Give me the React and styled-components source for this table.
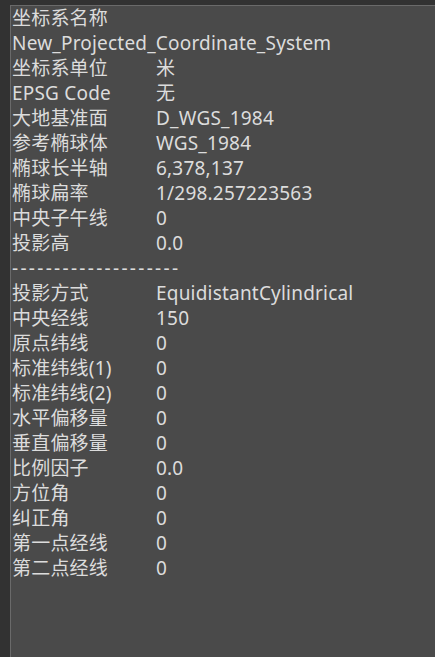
import React from 'react';
import styled, { createGlobalStyle } from 'styled-components';

const GlobalStyle = createGlobalStyle`
    html, body {
        margin: 0;
        padding: 0;
        background: #323232;
    }
`;

const rows = [
    { label: '坐标系名称' },
    { label: 'New_Projected_Coordinate_System' },
    { label: '坐标系单位', value: '米' },
    { label: 'EPSG Code', value: '无' },
    { label: '大地基准面', value: 'D_WGS_1984' },
    { label: '参考椭球体', value: 'WGS_1984' },
    { label: '椭球长半轴', value: '6,378,137' },
    { label: '椭球扁率', value: '1/298.257223563' },
    { label: '中央子午线', value: '0' },
    { label: '投影高', value: '0.0' },
    { divider: true },
    { label: '投影方式', value: 'EquidistantCylindrical' },
    { label: '中央经线', value: '150' },
    { label: '原点纬线', value: '0' },
    { label: '标准纬线(1)', value: '0' },
    { label: '标准纬线(2)', value: '0' },
    { label: '水平偏移量', value: '0' },
    { label: '垂直偏移量', value: '0' },
    { label: '比例因子', value: '0.0' },
    { label: '方位角', value: '0' },
    { label: '纠正角', value: '0' },
    { label: '第一点经线', value: '0' },
    { label: '第二点经线', value: '0' },
];

const App = () => {

    return (
        <Frame>
            <GlobalStyle />
            <Panel>
                {rows.map((row, i) => (
                    row.divider
                        ? <Divider key={i}>--------------------</Divider>
                        : (
                            <Row key={i} $full={row.value === undefined}>
                                <Cell>{row.label}</Cell>
                                {row.value !== undefined && <Cell>{row.value}</Cell>}
                            </Row>
                        )
                ))}
            </Panel>
        </Frame>
    )
}

export default App;

const Frame = styled.div`
    width: 435px;
    height: 657px;
    box-sizing: border-box;
    padding: 5px 0 0 10px;
    background: #323232;
    display: flex;
`;

const Panel = styled.div`
    flex: 1;
    background: #4a4a4a;
    border-top: 1px solid #6a6a6a;
    border-left: 1px solid #6a6a6a;
    padding: 0 0 0 1px;
    font-family: "Noto Sans", "Noto Sans CJK SC", sans-serif;
    font-size: 19px;
    letter-spacing: 0.2px;
    color: #dcdcdc;
`;

const Row = styled.div`
    height: 25px;
    display: grid;
    grid-template-columns: ${p => (p.$full ? '1fr' : '144px 1fr')};
    align-items: center;
    white-space: nowrap;
`;

const Cell = styled.span`
    line-height: 25px;
`;

const Divider = styled.div`
    height: 25px;
    line-height: 25px;
    letter-spacing: 2.3px;
    white-space: nowrap;
`;
